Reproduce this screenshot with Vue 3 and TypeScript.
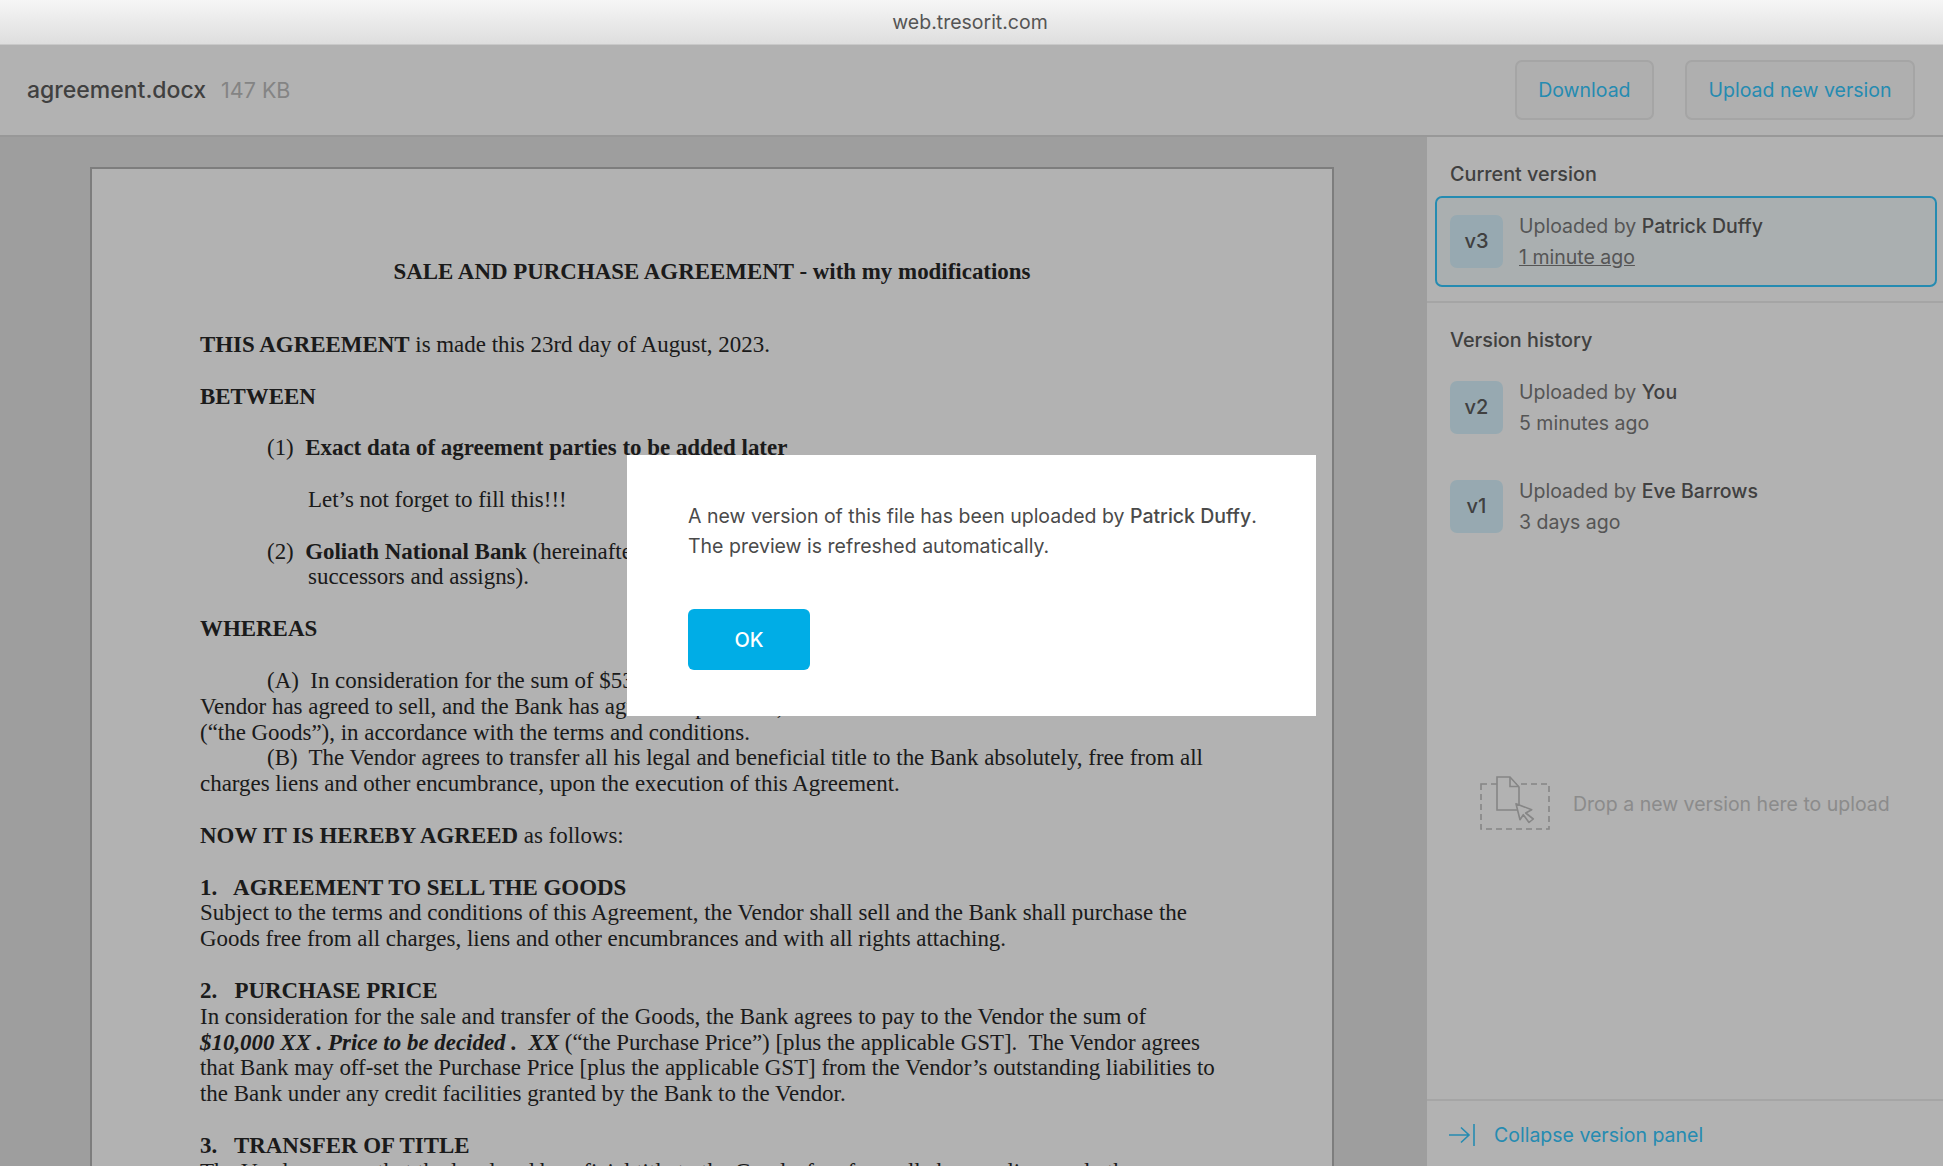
<script setup lang="ts">
interface Version { tag: string; by: string; when: string }
const history: Version[] = [
  { tag: 'v2', by: 'You', when: '5 minutes ago' },
  { tag: 'v1', by: 'Eve Barrows', when: '3 days ago' },
]
</script>

<template>
  <div class="window">
    <div class="browser-bar">web.tresorit.com</div>
    <div class="app">
      <header class="topbar">
        <div class="file"><span class="name">agreement.docx</span><span class="size">147 KB</span></div>
        <div class="actions">
          <button class="btn">Download</button>
          <button class="btn">Upload new version</button>
        </div>
      </header>
      <div class="main">
        <section class="viewer">
          <article class="page">
            <h1 class="title">SALE AND PURCHASE AGREEMENT - with my modifications</h1>
            <p><b>THIS AGREEMENT</b> is made this 23rd day of August, 2023.</p>
            <p><b>BETWEEN</b></p>
            <p class="ind">(1)&nbsp; <b>Exact data of agreement parties to be added later</b></p>
            <p class="ind2">Let’s not forget to fill this!!!</p>
            <p class="ind">(2)&nbsp; <b>Goliath National Bank</b> (hereinafter called “the Bank”) which expression includes its<br /><span class="cont">successors and assigns).</span></p>
            <p><b>WHEREAS</b></p>
            <p><span class="first">(A)&nbsp; In consideration for the sum of $53,000 paid by the Bank to the Vendor, the</span><br />Vendor has agreed to sell, and the Bank has agreed to purchase, the items listed below<br />(“the Goods”), in accordance with the terms and conditions.<br /><span class="first">(B)&nbsp; The Vendor agrees to transfer all his legal and beneficial title to the Bank absolutely, free from all</span><br />charges liens and other encumbrance, upon the execution of this Agreement.</p>
            <p><b>NOW IT IS HEREBY AGREED</b> as follows:</p>
            <p><b>1.&nbsp;&nbsp; AGREEMENT TO SELL THE GOODS</b><br />Subject to the terms and conditions of this Agreement, the Vendor shall sell and the Bank shall purchase the<br />Goods free from all charges, liens and other encumbrances and with all rights attaching.</p>
            <p><b>2.&nbsp;&nbsp; PURCHASE PRICE</b><br />In consideration for the sale and transfer of the Goods, the Bank agrees to pay to the Vendor the sum of<br /><b><i>$10,000 XX . Price to be decided .&nbsp; XX</i></b> (“the Purchase Price”) [plus the applicable GST].&nbsp; The Vendor agrees<br />that Bank may off-set the Purchase Price [plus the applicable GST] from the Vendor’s outstanding liabilities to<br />the Bank under any credit facilities granted by the Bank to the Vendor.</p>
            <p><b>3.&nbsp;&nbsp; TRANSFER OF TITLE</b><br />The Vendor agrees that the legal and beneficial title to the Goods, free from all charges, liens and other</p>
          </article>
        </section>
        <aside class="panel">
          <div class="current">
            <h2 class="heading">Current version</h2>
            <div class="version active">
              <span class="badge">v3</span>
              <div class="meta">
                <div>Uploaded by <b>Patrick Duffy</b></div>
                <div class="ago"><u>1 minute ago</u></div>
              </div>
            </div>
          </div>
          <div class="history">
            <h2 class="heading">Version history</h2>
            <div v-for="v in history" :key="v.tag" class="version">
              <span class="badge">{{ v.tag }}</span>
              <div class="meta">
                <div>Uploaded by <b>{{ v.by }}</b></div>
                <div class="ago">{{ v.when }}</div>
              </div>
            </div>
          </div>
          <div class="drop">
            <svg class="drop-icon" width="70" height="55" viewBox="0 0 70 55" fill="none">
              <rect x="1" y="8" width="68" height="45" stroke="#c0c0c0" stroke-width="1.6" stroke-dasharray="6 4" />
              <path d="M17 1H30L39 11V34H17Z" fill="#fff" stroke="#c0c0c0" stroke-width="1.6" />
              <path d="M30 1V10.5H39" stroke="#c0c0c0" stroke-width="1.6" />
              <path d="M36 27.7L51.7 33.7L45.7 37L53.3 43L49 46.5L43.3 38.7L40 43.7Z" fill="#fff" stroke="#c0c0c0" stroke-width="1.6" stroke-linejoin="round" />
            </svg>
            <span>Drop a new version here to upload</span>
          </div>
          <div class="collapse">
            <svg width="26" height="22" viewBox="0 0 26 22" fill="none" stroke="#36c8fe" stroke-width="1.6">
              <path d="M0 11H20M12 3.5L20 11L12 18.5" />
              <path d="M25 0V22" />
            </svg>
            <span>Collapse version panel</span>
          </div>
        </aside>
      </div>
      <div class="overlay">
        <div class="modal">
          <p class="modal-text">A new version of this file has been uploaded by <b>Patrick Duffy</b>.<br />The preview is refreshed automatically.</p>
          <button class="ok">OK</button>
        </div>
      </div>
    </div>
  </div>
</template>

<style>
html, body { margin: 0; height: 100%; overflow: hidden; background: #fff; }
</style>

<style scoped>
.window {
  height: 100vh;
  display: flex;
  flex-direction: column;
  font-family: Inter, "Noto Sans", sans-serif;
  font-size: 19.5px;
  color: #7a7a7a;
  overflow: hidden;
}
.browser-bar {
  height: 45px;
  flex: none;
  box-sizing: border-box;
  display: flex;
  align-items: center;
  justify-content: center;
  background: linear-gradient(#f6f6f6, #dedede);
  border-bottom: 1px solid #c9c9c9;
  color: #555;
  font-size: 19.5px;
  padding: 0 3px 1px 0;
}
.app {
  position: relative;
  flex: 1;
  min-height: 0;
  display: flex;
  flex-direction: column;
  background: #fff;
}
.topbar {
  height: 92px;
  flex: none;
  box-sizing: border-box;
  display: flex;
  align-items: center;
  justify-content: space-between;
  padding: 0 28px 0 27px;
  border-bottom: 2px solid #dadada;
}
.file { display: flex; align-items: baseline; gap: 15px; }
.name { font-size: 23px; font-weight: 500; color: #5c5c5c; }
.size { font-size: 21.5px; color: #bdbdbd; }
.actions { display: flex; gap: 31px; }
.btn {
  height: 60px;
  box-sizing: border-box;
  padding: 0 21.5px;
  font: inherit;
  color: #36c8fe;
  background: #fbfbfb;
  border: 2px solid #ececec;
  border-radius: 7px;
}
.main { flex: 1; min-height: 0; display: flex; }
.viewer {
  flex: 1;
  min-width: 0;
  background: #e2e2e2;
  padding: 30px 0 0 90px;
  overflow: hidden;
}
.page {
  width: 1244px;
  box-sizing: border-box;
  min-height: 1100px;
  padding: 90px 0 0 108px;
  background: #fff;
  border: 2px solid #b4b4b4;
  font-family: "Liberation Serif", "Times New Roman", serif;
  font-size: 22.93px;
  line-height: 25.85px;
  color: #272727;
  white-space: nowrap;
}
.page p { margin: 0 0 25.85px; }
.title {
  margin: 0 0 47px;
  width: 1024px;
  text-align: center;
  font: inherit;
  font-weight: 700;
}
.ind { padding-left: 67px; }
.ind2 { padding-left: 108px; }
.cont { padding-left: 41px; }
.first { padding-left: 67px; }
.panel {
  width: 516px;
  flex: none;
  display: flex;
  flex-direction: column;
  background: #fff;
}
.current {
  padding: 0 6px 14px 8px;
  border-bottom: 2px solid #ececec;
}
.heading {
  margin: 0;
  font-size: 19.8px;
  font-weight: 500;
  color: #5c5c5c;
  line-height: 24px;
}
.current .heading { padding: 25px 0 10px 15px; }
.version {
  display: flex;
  align-items: center;
  gap: 16px;
  height: 91px;
  box-sizing: border-box;
  padding: 0 13px;
  line-height: 31px;
}
.version.active {
  background: #f4fbfd;
  border: 2px solid #36c8fe;
  border-radius: 7px;
}
.badge {
  width: 53px;
  height: 53px;
  flex: none;
  display: flex;
  align-items: center;
  justify-content: center;
  background: #d8f3fe;
  border-radius: 7px;
  font-size: 20px;
  font-weight: 500;
  color: #5c5c5c;
}
.meta b { font-weight: 500; color: #5c5c5c; }
.ago { color: #7a7a7a; }
.history { padding: 25px 0 0 23px; }
.history .heading { padding-bottom: 6px; }
.history .version { padding: 0; height: 99px; }
.drop {
  margin-top: 220px;
  display: flex;
  align-items: center;
  gap: 23px;
  padding-left: 53px;
  color: #c8c8c8;
}
.collapse {
  margin-top: auto;
  height: 67px;
  box-sizing: border-box;
  display: flex;
  align-items: center;
  gap: 19px;
  padding: 3px 0 0 22px;
  border-top: 2px solid #ececec;
  color: #36c8fe;
}
.overlay {
  position: absolute;
  inset: 0;
  display: flex;
  align-items: center;
  justify-content: center;
  padding-bottom: 40px;
  background: rgba(0, 0, 0, 0.3);
}
.modal {
  width: 689px;
  height: 261px;
  box-sizing: border-box;
  padding: 46px 61px 0;
  background: #fff;
  color: #4a4a4a;
}
.modal-text { margin: 0 0 48px; line-height: 30px; white-space: nowrap; }
.modal-text b { font-weight: 500; }
.ok {
  display: block;
  width: 122px;
  height: 61px;
  border: 0;
  border-radius: 6px;
  background: #00ade6;
  color: #fff;
  font: inherit;
  font-size: 20px;
  font-weight: 500;
}
</style>
